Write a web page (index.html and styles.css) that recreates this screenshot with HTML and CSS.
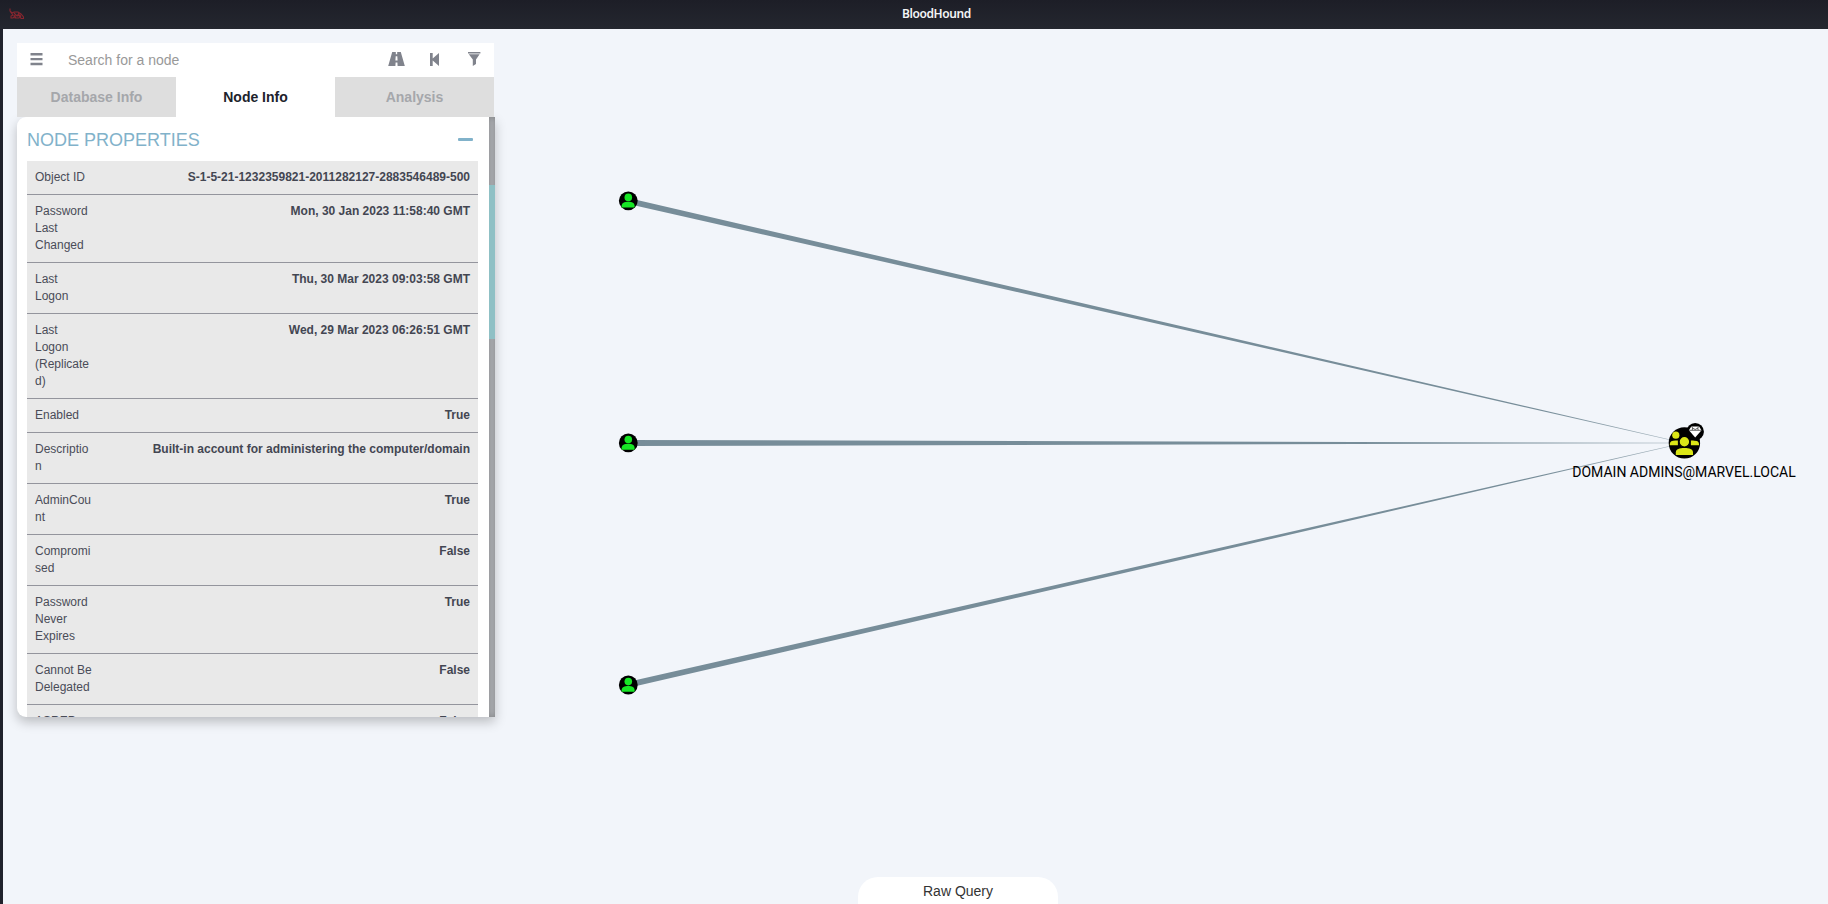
FILE: index.html
```html
<!DOCTYPE html>
<html lang="en">
<head>
<meta charset="utf-8">
<title>BloodHound</title>
<link rel="stylesheet" href="styles.css">
</head>
<body>
<header class="titlebar">
  <svg class="hound" width="16" height="12" viewBox="0 0 16 12"><path d="M1 .5V3L3 5 5 4H9L12 6 14.5 9V10.5H12L11 8 10 10H6V8L4 10H2V8L4 7 1.5 4M5 5 8 8 10 5M8 8 12 7M5 7 7 10M9 6 12 9" /></svg>
  <span class="app-name">BloodHound</span>
</header>
<main class="workspace">
  <svg class="graph" width="1825" height="875" viewBox="3 29 1825 875">
    <defs>
      <linearGradient id="fade" gradientUnits="userSpaceOnUse" x1="1540" y1="0" x2="1684" y2="0">
        <stop offset="0" stop-color="#778d99"/><stop offset="1" stop-color="#778d99" stop-opacity=".6"/>
      </linearGradient>
    </defs>
    <g class="edges" fill="url(#fade)">
      <path d="M627.4 197.7 1684 442.8V443.2L626.1 203.4Z"/>
      <path d="M628 440 1684 442.8V443.2L628 446Z"/>
      <path d="M627.4 682 1684 442.8V443.2L628.7 687.8Z"/>
    </g>
    <g class="user" transform="translate(628.3 200.8)"><circle r="9.4"/><path d="M-6.7 6.8V5C-6.7 2.3-3.8 .9 0 .9S6.3 2.3 6.3 5V6.8Z"/><circle class="face" cy="-3.4" r="3.8"/></g>
    <g class="user" transform="translate(628.3 442.9)"><circle r="9.4"/><path d="M-6.7 6.8V5C-6.7 2.3-3.8 .9 0 .9S6.3 2.3 6.3 5V6.8Z"/><circle class="face" cy="-3.4" r="3.8"/></g>
    <g class="user" transform="translate(628.3 685)"><circle r="9.4"/><path d="M-6.7 6.8V5C-6.7 2.3-3.8 .9 0 .9S6.3 2.3 6.3 5V6.8Z"/><circle class="face" cy="-3.4" r="3.8"/></g>
    <g transform="translate(1684.4 442.9)">
      <circle r="15.7"/>
      <g class="members">
        <circle cx="-8.6" cy="-7.7" r="3.6"/>
        <path d="M-14.6 2.3V1C-14.6-1.5-12.5-2.5-9-2.5H-6.5V2.3Z"/>
        <path d="M14.6 2.3V1C14.6-1.5 12.5-2.5 9-2.5H6.5V2.3Z"/>
        <circle class="front" cy="-1.2" r="5.3"/>
        <path d="M-8.6 12V9.5C-8.6 6.2-4.8 5.1 0 5.1S8.6 6.2 8.6 9.5V12Z"/>
      </g>
      <g transform="translate(10.8 -11.2)"><circle r="8.7"/><path class="gem" d="M-3.9-5.2H3.9L6.3-1.5 0 5.7-6.3-1.5Z"/><path class="facets" d="M-6-1.4H6M-3-1.6-2.6-3.6 0-2.2 2.6-3.6 3-1.6M-2.6-3.6-3.4-5M2.6-3.6 3.4-5"/></g>
    </g>
    <text class="node-label" x="1684" y="477" text-anchor="middle">DOMAIN ADMINS@MARVEL.LOCAL</text>
  </svg>
  <section class="panel">
    <div class="search">
      <svg class="icon menu" width="13" height="13" viewBox="0 0 13 13"><path d="M.5 0h12v2.4H.5zM.5 4.9h12v2.4H.5zM.5 9.8h12v2.4H.5z"/></svg>
      <span class="placeholder">Search for a node</span>
      <svg class="icon" width="17" height="14" viewBox="0 0 17 14"><path fill-rule="evenodd" d="M4.2 0H7.8V2.2H9.2V0H12.8L16.8 14H9.6L9.4 10.5H7.6L7.4 14H.2ZM7.7 4.2 7.4 8.4H9.6L9.3 4.2Z"/></svg>
      <svg class="icon back" width="9" height="13" viewBox="0 0 9 13"><path d="M0 0H2.7V5.4L9 0V13L2.7 7.6V13H0Z"/></svg>
      <svg class="icon filter" width="13" height="14" viewBox="0 0 13 14"><path d="M0 0H12.4V1.4H0ZM.8 2.2H11.6L8 7.5V12L4.8 14V7.5Z"/></svg>
    </div>
    <nav class="tabs">
      <div class="tab">Database Info</div>
      <div class="tab active">Node Info</div>
      <div class="tab">Analysis</div>
    </nav>
    <div class="card">
      <div class="content">
        <h1 class="heading">NODE PROPERTIES<span class="collapse"></span></h1>
        <dl class="props">
          <div class="row"><dt>Object ID</dt><dd>S-1-5-21-1232359821-2011282127-2883546489-500</dd></div>
          <div class="row"><dt>Password<br>Last<br>Changed</dt><dd>Mon, 30 Jan 2023 11:58:40 GMT</dd></div>
          <div class="row"><dt>Last<br>Logon</dt><dd>Thu, 30 Mar 2023 09:03:58 GMT</dd></div>
          <div class="row"><dt>Last<br>Logon<br>(Replicate<br>d)</dt><dd>Wed, 29 Mar 2023 06:26:51 GMT</dd></div>
          <div class="row"><dt>Enabled</dt><dd>True</dd></div>
          <div class="row"><dt>Descriptio<br>n</dt><dd>Built-in account for administering the computer/domain</dd></div>
          <div class="row"><dt>AdminCou<br>nt</dt><dd>True</dd></div>
          <div class="row"><dt>Compromi<br>sed</dt><dd>False</dd></div>
          <div class="row"><dt>Password<br>Never<br>Expires</dt><dd>True</dd></div>
          <div class="row"><dt>Cannot Be<br>Delegated</dt><dd>False</dd></div>
          <div class="row"><dt>ASREP</dt><dd>False</dd></div>
        </dl>
      </div>
      <div class="scrollbar"><div class="thumb"></div></div>
    </div>
  </section>
  <div class="raw-query">Raw Query</div>
</main>
</body>
</html>
```

FILE: styles.css
```css
* { box-sizing: border-box; }
body {
  margin: 0;
  height: 904px;
  overflow: hidden;
  display: flex;
  flex-direction: column;
  background: #20222c;
  font-family: "Liberation Sans", Arial, sans-serif;
}
.titlebar {
  height: 29px;
  flex: none;
  display: grid;
  grid-template-columns: 48px 1fr 48px;
  background: linear-gradient(#1d1e27, #24272f);
  color: #f3f4f5;
}
.hound { margin: 8px 0 0 9px; fill: none; stroke: #87262f; stroke-width: 1.1; }
.app-name {
  justify-self: center;
  padding-left: 46px;
  width: 116px;
  font: 600 12px/28px "Noto Sans", sans-serif;
  letter-spacing: -.4px;
  white-space: nowrap;
}
.workspace {
  position: relative;
  flex: 1;
  margin-left: 3px;
  background: #f2f5fa;
  overflow: hidden;
}
.graph { position: absolute; inset: 0; }
.user path, .user .face { fill: #17e625; }
.members { fill: #dbe617; }
.front { stroke: #000; stroke-width: 1.2; }
.gem { fill: #fff; }
.facets { fill: none; stroke: #000; stroke-width: .6; }
.node-label { font: 14px Roboto, sans-serif; }
.panel { position: relative; width: 478px; margin: 14px 0 0 14px; }
.search {
  display: flex;
  align-items: center;
  width: 477px;
  height: 34px;
  padding: 0 13px;
  background: #fff;
}
.icon { flex: none; fill: #80838c; margin-top: -2px; }
.menu { margin-top: -1px; }
.placeholder { flex: 1; padding-left: 25px; font-size: 14px; color: #999; }
.back { margin-left: 25px; }
.filter { margin-left: 29px; margin-top: -3px; }
.tabs { display: flex; width: 477px; }
.tab {
  flex: 1;
  height: 40px;
  background: #dedede;
  color: #a5a7ab;
  font: bold 14px/40px "Liberation Sans", sans-serif;
  text-align: center;
}
.active { background: #fff; color: #20222c; }
.card {
  display: flex;
  height: 600px;
  overflow: hidden;
  background: #fff;
  border-radius: 9px 0 0 9px;
  box-shadow: 0 5px 12px rgba(0, 0, 0, .23);
}
.content { flex: 1; padding: 0 11px 0 10px; }
.heading {
  display: flex;
  justify-content: space-between;
  align-items: center;
  height: 44px;
  margin: 0;
  padding: 2px 5px 0 0;
  font-size: 18px;
  font-weight: 400;
  color: #81b2ca;
}
.collapse { width: 15px; height: 3px; margin-top: -1px; border-radius: 1px; background: #81b2ca; }
.props { margin: 0; background: #e9e9e9; }
.row {
  display: flex;
  justify-content: space-between;
  padding: 8px;
  border-bottom: 1px solid #94959d;
  font-size: 12px;
  line-height: 17px;
  color: #494c58;
}
dd { margin: 0; font-weight: bold; color: #434652; }
.scrollbar {
  width: 6px;
  padding-top: 68px;
  background: #b6b8bc;
  box-shadow: inset 0 0 6px rgba(0, 0, 0, .3);
}
.thumb { height: 154px; background: #8fc0c5; }
.raw-query {
  position: absolute;
  left: 855px;
  bottom: 0;
  width: 200px;
  height: 27px;
  border-radius: 20px 20px 0 0;
  background: #fff;
  color: #333;
  font-size: 14px;
  line-height: 28px;
  text-align: center;
}
```
